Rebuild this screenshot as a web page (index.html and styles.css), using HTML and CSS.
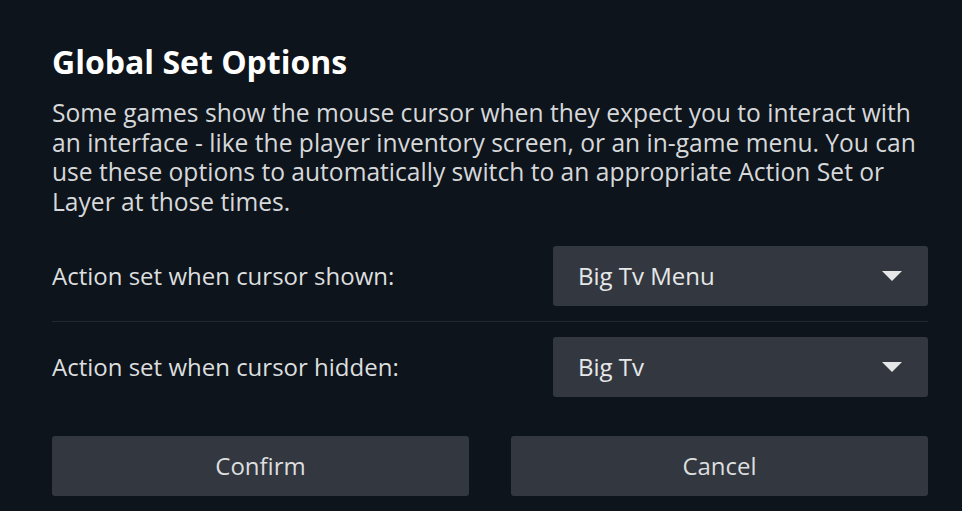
FILE: index.html
```html
<!DOCTYPE html>
<html>
<head>
<meta charset="utf-8">
<link rel="stylesheet" href="styles.css">
</head>
<body>
<div class="dialog">
  <h1 class="title">Global Set Options</h1>
  <p class="desc">Some games show the mouse cursor when they expect you to interact with an interface - like the player inventory screen, or an in-game menu. You can use these options to automatically switch to an appropriate Action Set or Layer at those times.</p>
  <div class="row">
    <div class="label">Action set when cursor shown:</div>
    <div class="dropdown"><span>Big Tv Menu</span><svg class="arrow" width="20" height="10" viewBox="0 0 20 10"><path d="M0 0 H20 L10 10 Z" fill="#e6e7e8"/></svg></div>
  </div>
  <div class="row">
    <div class="label">Action set when cursor hidden:</div>
    <div class="dropdown"><span>Big Tv</span><svg class="arrow" width="20" height="10" viewBox="0 0 20 10"><path d="M0 0 H20 L10 10 Z" fill="#e6e7e8"/></svg></div>
  </div>
  <div class="buttons">
    <button class="btn">Confirm</button>
    <button class="btn">Cancel</button>
  </div>
</div>
</body>
</html>
```
FILE: styles.css
```css
html, body {
  margin: 0;
  padding: 0;
  background: #0e141b;
  height: 100%;
}
.dialog {
  padding: 40px 34px 0 52px;
  font-family: "Open Sans", "Noto Sans", sans-serif;
  color: #dcdedf;
}
.title {
  margin: 0;
  font-size: 32px;
  font-weight: 700;
  line-height: 44px;
  color: #ffffff;
}
.desc {
  margin: 14px 0 0 0;
  font-size: 24.6px;
  line-height: 29.7px;
  color: #d6d8da;
}
.row {
  display: flex;
  align-items: center;
  padding: 15px 0;
  border-bottom: 1px solid #23272e;
}
.row:first-of-type {
  margin-top: 14px;
}
.row + .row {
  border-bottom: none;
}
.label {
  flex: 1;
  font-size: 24px;
  color: #dcdedf;
}
.dropdown {
  width: 375px;
  height: 60px;
  box-sizing: border-box;
  background: #33373f;
  border-radius: 3px;
  display: flex;
  align-items: center;
  justify-content: space-between;
  padding: 0 26px 0 25px;
  font-size: 24px;
  color: #e6e7e8;
}
.buttons {
  display: flex;
  gap: 42px;
  margin-top: 24px;
}
.btn {
  flex: 1;
  height: 60px;
  border: none;
  border-radius: 3px;
  background: #33373f;
  color: #dcdedf;
  font-family: "Open Sans", "Noto Sans", sans-serif;
  font-size: 24px;
  padding: 0;
}
```
